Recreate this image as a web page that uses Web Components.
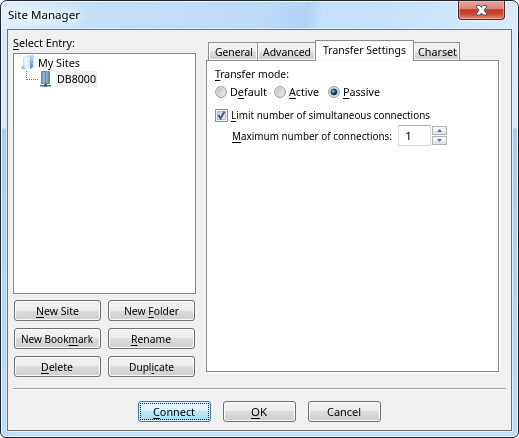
<!DOCTYPE html>
<html lang="en"><head><meta charset="utf-8"><title>Site Manager</title>
<style>
html,body{margin:0;width:519px;height:438px;overflow:hidden;background:#fff}
body{font:11.6px/16px "Noto Sans","Open Sans",sans-serif;color:#000}
</style></head><body>
<site-dialog>
  <fit-text slot="title" w="71">Site Manager</fit-text>
  <site-tree slot="left"></site-tree>
  <div slot="commands" style="display:contents">
    <push-button><fit-text w="42"><u>N</u>ew Site</fit-text></push-button>
    <push-button><fit-text w="54">New <u>F</u>older</fit-text></push-button>
    <push-button><fit-text w="71">New Book<u>m</u>ark</fit-text></push-button>
    <push-button><fit-text w="39"><u>R</u>ename</fit-text></push-button>
    <push-button><fit-text w="31"><u>D</u>elete</fit-text></push-button>
    <push-button><fit-text w="44">Dupl<u>i</u>cate</fit-text></push-button>
  </div>
  <transfer-panel slot="right"></transfer-panel>
  <div slot="footer" style="display:contents">
    <push-button primary><fit-text w="41"><u>C</u>onnect</fit-text></push-button>
    <push-button><fit-text w="15"><u>O</u>K</fit-text></push-button>
    <push-button><fit-text w="33">Cancel</fit-text></push-button>
  </div>
</site-dialog>
<script>
const define = (name, html, init) => customElements.define(name, class extends HTMLElement {
  constructor(){ super(); this.attachShadow({mode:'open'}).innerHTML = html; }
  connectedCallback(){ if(init) init(this); }
});

/* Label whose glyphs are condensed or widened to the width given in "w". */
define('fit-text', `<style>
:host{display:inline-block;white-space:nowrap;line-height:16px;height:16px;flex:none}
span{display:inline-block;transform-origin:0 0}
::slotted(u){text-decoration:underline;text-decoration-thickness:1px;text-underline-offset:2px;text-decoration-skip-ink:none}
</style><span><slot></slot></span>`, el => {
  const w = +el.getAttribute('w'), s = el.shadowRoot.querySelector('span');
  s.style.transform = 'none';
  const natural = s.getBoundingClientRect().width;
  s.style.transform = 'scaleX(' + ((w + 1) / natural) + ')';
  el.style.width = w + 'px';
});

define('push-button', `<style>
:host{display:flex;align-items:center;justify-content:center;box-sizing:border-box;height:21px;border:1px solid #707070;border-radius:3px;
background:linear-gradient(#f3f3f3 0,#ebebeb 50%,#dcdcdc 50%,#cecece 100%);box-shadow:inset 0 0 0 1px #fbfbfb}
:host([primary]){border-color:#3c7fb1;background:linear-gradient(#eaf6fd 0,#d9f0fc 50%,#bee6fd 50%,#a7d9f5 100%);box-shadow:inset 0 0 0 1px #d8f2fd}
div{display:flex;align-items:center;justify-content:center;box-sizing:border-box;width:calc(100% - 2px);height:17px;padding-right:2px}
:host([primary]) div{border:1px dotted #222}
</style><div><slot></slot></div>`);

define('close-button', `<style>
:host{display:block;box-sizing:border-box;width:47px;height:19px;border:1px solid #54262a;border-top:0;border-radius:0 0 4px 4px;
background:linear-gradient(#e9aa9d 0,#d98372 45%,#bd3a25 48%,#c94d35 75%,#e69275 100%);box-shadow:inset 0 0 0 1px #f0c2b888,0 0 1px 1px #ffffff90}
svg{display:block;margin:4px auto 0}
</style><svg width="13" height="11" viewBox="0 0 13 11"><path d="M1.5 .5h3.500l1.500 2 1.500-2h3.500v1.500L9 5.300l2.500 3.200V10H8L6.500 8 5 10H1.500V8.500L4 5.300 1.500 2z" fill="#fff" stroke="#535666" stroke-width="1"/></svg>`);

define('site-tree', `<style>
:host{display:block;box-sizing:border-box;width:183px;height:241px;border:1px solid #828790;background:#fff;padding:1px 0 0 7px}
.row{display:flex;height:16px;align-items:center}
.row svg{flex:none}
.root fit-text{margin-left:2px}
.name{display:flex;align-items:center;height:16px;width:41px;background:#f0f0f0;padding-left:1px;margin-left:2px;box-sizing:border-box}
</style>
<div class="row root"><svg width="15" height="16" viewBox="0 0 15 16"><defs><linearGradient id="f"><stop stop-color="#fff"/><stop offset="1" stop-color="#cfe5f4"/></linearGradient><linearGradient id="g" x2="0" y2="1"><stop stop-color="#c4e2f5"/><stop offset="1" stop-color="#4283c0"/></linearGradient></defs>
<path d="M2.500 2.500 9 .7v12l-6.500 1z" fill="#e1eff8" stroke="#a9c3d4" stroke-width=".6"/><path d="M9 1 12 .5V12l-3 2z" fill="url(#g)" stroke="#88aac6" stroke-width=".5"/><path d="M4 3 9 1.500v12l-4 1.200z" fill="url(#f)"/><path d="M0 12 3 10l1 4.500H1z" fill="#a9c8de"/></svg><fit-text w="41">My Sites</fit-text></div>
<div class="row"><svg width="33" height="16" viewBox="0 0 33 16"><defs><linearGradient id="s"><stop stop-color="#5b7ba2"/><stop offset=".3" stop-color="#a6c5e2"/><stop offset=".5" stop-color="#6389b4"/><stop offset=".7" stop-color="#94b8dc"/><stop offset="1" stop-color="#4f7099"/></linearGradient></defs>
<path d="M5.500 0v9M6 8.500h11" stroke="#777" stroke-dasharray="1 1" fill="none"/><path d="M20.500 .5h8v12h-8z" fill="url(#s)" stroke="#59799f" stroke-width=".8"/><path d="M24 12.500h1.500v2H24z" fill="#4c6684"/><path d="M19 14h11v1.500H19z" fill="#4c6c87"/><path d="M23 13.500h3v2h-3z" fill="#35536f"/></svg><div class="name"><fit-text w="38">DB8000</fit-text></div></div>`);

define('tab-item', `<style>
:host{display:flex;box-sizing:border-box;justify-content:center;align-items:center;height:18px;border:1px solid #8c8e94;border-bottom:0;border-left-width:0;
background:linear-gradient(#f3f3f3 0,#ebebeb 50%,#dcdcdc 50%,#cfcfcf 100%);box-shadow:inset 0 0 0 1px #f8f8f8}
:host([first]){border-left-width:1px}
:host([active]){height:21px;border-left-width:1px;background:#fff;margin:0 0 -1px -1px;padding:0 2px 2px 0;position:relative}
</style><slot></slot>`);

define('radio-button', `<style>
:host{display:flex;align-items:center;height:16px;gap:3px}svg{flex:none}
.dot{display:none}:host([checked]) .dot{display:inline}
</style><svg width="12" height="12" viewBox="0 0 12 12"><defs><linearGradient id="a" x2="1" y2="1"><stop stop-color="#b5bac0"/><stop offset="1" stop-color="#f7f7f7"/></linearGradient><radialGradient id="b" cx=".38" cy=".38"><stop stop-color="#a5ecff"/><stop offset=".4" stop-color="#2c91bd"/><stop offset="1" stop-color="#08233f"/></radialGradient></defs><circle cx="6" cy="6" r="5.400" fill="#f4f4f4" stroke="#8e8f8f"/><circle cx="6" cy="6" r="4" fill="url(#a)" stroke="#c9cccf" stroke-width=".6"/><circle class="dot" cx="6" cy="6" r="3" fill="url(#b)" stroke="#12334f" stroke-width=".7"/></svg><slot></slot>`);

define('check-box', `<style>:host{display:flex;align-items:center;height:16px;gap:3px}svg{flex:none}</style>
<svg width="13" height="13" viewBox="0 0 13 13"><defs><linearGradient id="a" x2="1" y2="1"><stop stop-color="#c5cbd2"/><stop offset="1" stop-color="#f5f5f5"/></linearGradient></defs><path d="M.5.5h12v12H.5z" fill="#f4f4f4" stroke="#8e8f8f"/><path d="M2.500 2.500h8v8h-8z" fill="url(#a)" stroke="#b7bcc2"/><path d="m3.500 6 2 3.500L9.500 2.500" fill="none" stroke="#435b9c" stroke-width="2"/></svg><slot></slot>`);

define('spin-box', `<style>
:host{display:flex;align-items:center;gap:1px;height:21px}
.v{box-sizing:border-box;width:33px;height:21px;border:1px solid #d3d8df;border-top-color:#abadb3;border-radius:1px;background:#fff;padding:2px 0 0 6px}
.s{display:grid;gap:1px}
.s div{box-sizing:border-box;width:15px;height:9px;border:1px solid #b0b3b8;background:linear-gradient(#f6f6f6 50%,#e5e5e5 50%);display:flex;align-items:center;justify-content:center}
svg{display:block}
</style><div class="v"><slot></slot></div><div class="s"><div><svg width="5" height="3"><path d="M0 3 2.500 0 5 3z" fill="#4d6dbd"/></svg></div><div><svg width="5" height="3"><path d="M0 0h5L2.500 3z" fill="#4d6dbd"/></svg></div></div>`);

define('transfer-panel', `<style>
:host{display:block;width:295px}
.tabs{display:flex;align-items:flex-end;height:20px;padding-left:2px}
.page{box-sizing:border-box;width:293px;height:312px;border:1px solid #898c95;background:#fff;padding:5px 0 0 8px;box-shadow:2px 2px #fafafa}
.radios{display:flex;margin-top:2px}
check-box{margin-top:7px}
.max{display:flex;align-items:center;margin:2px 0 0 17px;gap:7px}
</style>
<div class="tabs"><tab-item first style="width:50px"><fit-text w="37">General</fit-text></tab-item><tab-item style="width:58px"><fit-text w="47">Advanced</fit-text></tab-item><tab-item active style="width:99px"><fit-text w="82">Transfer Settings</fit-text></tab-item><tab-item style="width:46px"><fit-text w="38">Charset</fit-text></tab-item></div>
<div class="page">
<fit-text w="73"><u>T</u>ransfer mode:</fit-text>
<div class="radios"><radio-button style="width:59px"><fit-text w="36">D<u>e</u>fault</fit-text></radio-button><radio-button style="width:54px"><fit-text w="29"><u>A</u>ctive</fit-text></radio-button><radio-button checked><fit-text w="36"><u>P</u>assive</fit-text></radio-button></div>
<check-box><fit-text w="198"><u>L</u>imit number of simultaneous connections</fit-text></check-box>
<div class="max"><fit-text w="159"><u>M</u>aximum number of connections:</fit-text><spin-box><fit-text w="6">1</fit-text></spin-box></div>
</div>`);

define('site-dialog', `<style>
:host{display:flex;flex-direction:column;box-sizing:border-box;width:519px;height:438px;border:1px solid #20242c;border-radius:7px 7px 6px 6px;overflow:hidden;
background:linear-gradient(100deg,#e2effd 0,#c4dff9 18%,#bddcfa 50%,#b0d3f6 59%,#c5e0fb 62%,#c9e3fc 80%,#d9ebfd 100%) 0 0/100% 28px no-repeat,
linear-gradient(#d9eafd 0,#d5e8fc 127px,#a9cdf0 128px,#aed1f4 240px,#bedcfb 100%);box-shadow:inset 0 0 0 1px #eef8ff}
header{display:flex;justify-content:space-between;height:28px;flex:none;padding:0 13px 0 7px;box-sizing:border-box}
header ::slotted(*){margin-top:6px;filter:drop-shadow(0 0 4px #fff) drop-shadow(0 0 4px #fff)}
main{box-sizing:border-box;width:505px;height:402px;margin-left:6px;border:1px solid #65717f;background:#f0f0f0;padding:5px 0 0 5px;box-shadow:0 0 0 1px #e0f2ff}
.cols{display:flex;height:353px;gap:10px}
.left{width:183px;flex:none}
.right{padding-top:5px}
.label{height:18px}
.commands{display:grid;grid-template-columns:87px 87px;gap:7px;margin:6px 0 0 1px}
hr{margin:0;border:0;border-top:1px solid #a0a0a0;border-bottom:1px solid #fff;width:493px}
footer{display:flex;gap:12px;padding:11px 0 0 125px}
.footer{display:grid;grid-template-columns:73px 73px 73px;gap:12px}
</style>
<header><slot name="title"></slot><close-button></close-button></header>
<main><div class="cols"><div class="left"><div class="label"><fit-text w="61"><u>S</u>elect Entry:</fit-text></div><slot name="left"></slot><div class="commands"><slot name="commands"></slot></div></div><div class="right"><slot name="right"></slot></div></div><hr><footer><div class="footer"><slot name="footer"></slot></div></footer></main>`);
</script></body></html>
